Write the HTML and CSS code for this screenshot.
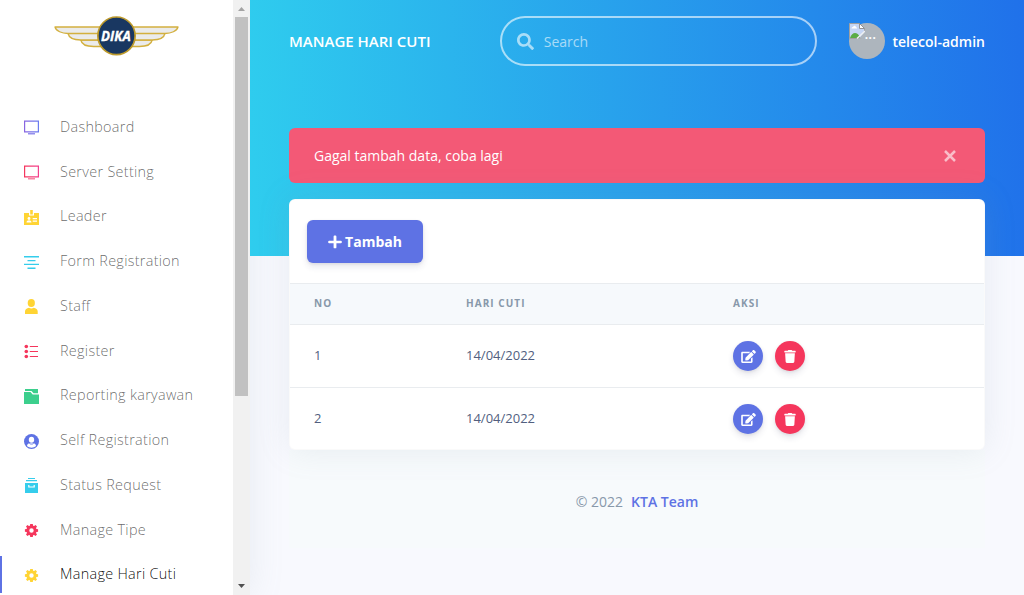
FILE: index.html
```html
<!DOCTYPE html>
<html lang="id">
<head>
<meta charset="utf-8">
<title>Manage Hari Cuti</title>
<link rel="stylesheet" href="styles.css">
</head>
<body>
<svg class="defs" width="0" height="0" aria-hidden="true">
  <defs>
    <linearGradient id="g-primary" gradientUnits="userSpaceOnUse" x1="0" y1="0" x2="15" y2="0"><stop stop-color="#8965e0"/><stop offset="1" stop-color="#6a7df0"/></linearGradient>
    <linearGradient id="g-pink" gradientUnits="userSpaceOnUse" x1="0" y1="0" x2="15" y2="0"><stop stop-color="#f5365c"/><stop offset="1" stop-color="#f3408f"/></linearGradient>
    <symbol id="gear" viewBox="0 0 15 15"><path fill-rule="evenodd" fill="currentColor" d="M6.200 1h2.600l.3 1.700 1 .4 1.400-1 1.500 1.500-1 1.400.4 1 1.700.3v2.400l-1.700.3-.4 1 1 1.400-1.500 1.500-1.400-1-1 .4L8.800 14H6.200l-.3-1.700-1-.4-1.400 1L2 11.400l1-1.400-.4-1L.9 8.700V6.300L2.600 6l.4-1-1-1.400L3.500 2.100l1.400 1 1-.4zM7.500 5.300a2.200 2.200 0 1 0 0 4.400 2.200 2.200 0 0 0 0-4.400z"/></symbol>
    <symbol id="edit" viewBox="0 0 576 512"><path fill="currentColor" d="M402.600 83.200l90.200 90.200c3.800 3.800 3.800 10 0 13.800L274.400 405.600l-92.800 10.300c-12.400 1.400-22.900-9.100-21.500-21.500l10.300-92.800L388.800 83.200c3.800-3.800 10-3.800 13.800 0zm162-22.900l-48.800-48.800c-15.200-15.200-39.900-15.200-55.200 0l-35.400 35.400c-3.800 3.800-3.800 10 0 13.800l90.200 90.200c3.800 3.800 10 3.800 13.800 0l35.400-35.400c15.200-15.300 15.200-40 0-55.200zM384 346.200V448H64V128h229.800c3.200 0 6.200-1.300 8.500-3.500l40-40c7.600-7.600 2.200-20.500-8.500-20.500H48C21.500 64 0 85.500 0 112v352c0 26.500 21.500 48 48 48h352c26.500 0 48-21.500 48-48V306.200c0-10.700-12.900-16-20.500-8.500l-40 40c-2.200 2.300-3.500 5.300-3.500 8.500z"/></symbol>
    <symbol id="trash" viewBox="0 0 448 512"><path fill="currentColor" d="M432 32H312l-9.400-18.700A24 24 0 0 0 281.100 0H166.800a23.700 23.700 0 0 0-21.400 13.300L136 32H16A16 16 0 0 0 0 48v32a16 16 0 0 0 16 16h416a16 16 0 0 0 16-16V48a16 16 0 0 0-16-16zM53.200 467a48 48 0 0 0 47.900 45h245.800a48 48 0 0 0 47.900-45L416 128H32z"/></symbol>
  </defs>
</svg>
<div class="app">
  <aside class="sidebar">
    <div class="sidebar-body">
      <div class="brand">
        <svg width="125" height="40" viewBox="0 0 126 40" preserveAspectRatio="none">
          <g fill="#ebebeb" stroke="#d3b03f" stroke-width="1.300" stroke-linejoin="round">
            <g id="wing">
              <path d="M50 24H27c1 5 7 6.500 13 6.500h10z"/>
              <path d="M50 17H14c1 5 7 7 13 7h23z"/>
              <path d="M50 11H1c1 4 7 6.500 13 6.500h36z"/>
            </g>
            <use href="#wing" transform="matrix(-1 0 0 1 126 0)"/>
          </g>
          <circle cx="63" cy="19.800" r="18.800" fill="#193761" stroke="#bd9a2c" stroke-width="1.700"/>
          <text class="logo-text" x="62.500" y="25" text-anchor="middle" textLength="30" lengthAdjust="spacingAndGlyphs">DIKA</text>
        </svg>
      </div>
      <nav class="nav">
        <a class="nav-item"><svg class="ico" viewBox="0 0 15 15"><path fill="none" stroke="url(#g-primary)" stroke-width="1.200" d="M.6 1.100h13.800v10.800H.6z"/><path fill="#7b74e8" d="M4 13.200h7v1.200H4z"/></svg><span>Dashboard</span></a>
        <a class="nav-item"><svg class="ico" viewBox="0 0 15 15"><path fill="none" stroke="url(#g-pink)" stroke-width="1.200" d="M.6 1.100h13.800v10.800H.6z"/><path fill="#f56a8c" d="M4 13.200h7v1.200H4z"/></svg><span>Server Setting</span></a>
        <a class="nav-item yellow"><svg class="ico" viewBox="0 0 15 15"><path fill="currentColor" d="M0 3h5v2.500h5V3h5v12H0z"/><path fill="currentColor" d="M6.200 0h2.600v4.500H6.200z"/><circle cx="5" cy="8.500" r="1.400" fill="#fff"/><path fill="#fff" d="M2.500 12.500c0-3 5-3 5 0zM8.700 8H13v1.200H8.700zM8.700 10.500H13v1.200H8.700z"/></svg><span>Leader</span></a>
        <a class="nav-item cyan"><svg class="ico" viewBox="0 0 15 15"><path fill="currentColor" d="M0 1h15v1.500H0zM3.500 5h8v1.300h-8zM0 8.800h15v1.300H0zM3.500 12.600h8V14h-8z"/></svg><span>Form Registration</span></a>
        <a class="nav-item yellow"><svg class="ico" viewBox="0 0 15 15"><ellipse cx="7.300" cy="4" rx="3.600" ry="4" fill="currentColor"/><path fill="currentColor" d="M1 15v-2.500C1 10.500 2.800 9 5 8.800c1.500.8 3.200.8 4.700 0 2.200.2 4 1.700 4 3.700V15z"/></svg><span>Staff</span></a>
        <a class="nav-item red"><svg class="ico" viewBox="0 0 15 15"><g fill="currentColor"><circle cx="2.300" cy="2.500" r="1.800"/><circle cx="2.300" cy="7.500" r="1.800"/><circle cx="2.300" cy="12.500" r="1.800"/><path d="M5.800 1.900H14V3H5.800zM5.800 6.900H14V8H5.800zM5.800 11.900H14V13H5.800z"/></g></svg><span>Register</span></a>
        <a class="nav-item green"><svg class="ico" viewBox="0 0 15 15"><path fill="currentColor" d="M1 0h13v4.300H9.500L7.500 2H1z"/><path fill="currentColor" d="M0 3h6.500l2.200 2.500H15V15H0z"/></svg><span>Reporting karyawan</span></a>
        <a class="nav-item indigo"><svg class="ico" viewBox="0 0 15 15"><circle cx="7.500" cy="7.500" r="7.500" fill="currentColor"/><ellipse cx="7.500" cy="5.800" rx="2.700" ry="3" fill="#fff"/><path fill="#fff" d="M3 12c.2-2.200 2-2.700 3-2.700h3c1 0 2.800.5 3 2.700-2.500 2.200-6.500 2.200-9 0z"/><path stroke="currentColor" stroke-width=".8" fill="none" d="M5.300 9.300c1.200 1.200 3.200 1.200 4.400 0"/></svg><span>Self Registration</span></a>
        <a class="nav-item cyan"><svg class="ico" viewBox="0 0 15 15"><path fill="currentColor" d="M4 0h7v1.100H4zM2 2h11v1.200H2zM1 5h13v10H1z"/><path fill="none" stroke="#fff" stroke-width="1.200" d="M4.800 7v2h5.400V7"/></svg><span>Status Request</span></a>
        <a class="nav-item red"><svg class="ico"><use href="#gear"/></svg><span>Manage Tipe</span></a>
        <a class="nav-item yellow active"><svg class="ico"><use href="#gear"/></svg><span>Manage Hari Cuti</span></a>
      </nav>
    </div>
    <div class="scrollbar">
      <svg width="17" height="17" viewBox="0 0 17 17"><path fill="#a3a3a3" d="M5 11h7L8.500 7z"/></svg>
      <div class="thumb"></div>
      <svg class="down" width="17" height="17" viewBox="0 0 17 17"><path fill="#505050" d="M5 6h7l-3.500 4z"/></svg>
    </div>
  </aside>
  <main class="main">
    <header class="topbar">
      <h1 class="title">MANAGE HARI CUTI</h1>
      <div class="search">
        <svg width="17" height="17" viewBox="0 0 512 512"><path fill="currentColor" d="M505 442.700L405.300 343c-4.500-4.500-10.600-7-17-7H372c27.600-35.300 44-79.700 44-128C416 93.100 322.900 0 208 0S0 93.100 0 208s93.100 208 208 208c48.300 0 92.700-16.400 128-44v16.300c0 6.400 2.500 12.500 7 17l99.700 99.700c9.400 9.400 24.600 9.400 33.900 0l28.300-28.300c9.400-9.400 9.400-24.600.1-34zM208 336c-70.700 0-128-57.200-128-128 0-70.700 57.200-128 128-128 70.700 0 128 57.200 128 128 0 70.700-57.200 128-128 128z"/></svg>
        <span>Search</span>
      </div>
      <div class="user">
        <div class="avatar">
          <svg width="16" height="16" viewBox="0 0 16 16"><path fill="#c5d5f4" stroke="#a0a0a0" d="M.5.500h10l5 5v10H.5z"/><path fill="#fff" stroke="#929292" d="M10.500.500v5h5z"/><path fill="#fff" d="M2.500 5.500c0-1.500 1.200-1.500 1.500-1.500 1-2 3-1 3 .3 1.300 0 1.300 1.200 1 1.200z"/><path fill="#5aac46" d="M1 15c2-6 7-7 10-1l.5 1z"/><path fill="#adb5bd" d="M16 8.500V16h-2l-4-.5z"/><path stroke="#eef0f2" stroke-width="1.500" d="M8 15.500L16 8"/></svg>
          <span>...</span>
        </div>
        <span>telecol-admin</span>
      </div>
    </header>
    <div class="content">
      <div class="alert"><span>Gagal tambah data, coba lagi</span>
        <svg width="12" height="12" viewBox="0 0 12 12"><path stroke="currentColor" stroke-width="2.500" d="M1 1l10 10M11 1L1 11"/></svg>
      </div>
      <section class="card">
        <div class="card-header">
          <button class="btn"><svg width="14" height="14" viewBox="0 0 13 14" preserveAspectRatio="none"><path fill="currentColor" d="M5.200 1.500c0-.6.300-.9.900-.9h.8c.6 0 .9.300.9.900v4.200h4.100c.6 0 .9.300.9.800v.9c0 .5-.3.800-.9.800H7.800v4.200c0 .5-.3.900-.9.900h-.8c-.6 0-.9-.4-.9-.9V8.200H1.100c-.6 0-.9-.3-.9-.8v-.9c0-.5.300-.8.900-.8h4.100z"/></svg><span>Tambah</span></button>
        </div>
        <div class="row head"><span>NO</span><span>HARI CUTI</span><span>AKSI</span></div>
        <div class="row"><span>1</span><span>14/04/2022</span><div class="actions"><a class="round"><svg width="15" height="13"><use href="#edit"/></svg></a><a class="round del"><svg width="12" height="13"><use href="#trash"/></svg></a></div></div>
        <div class="row"><span>2</span><span>14/04/2022</span><div class="actions"><a class="round"><svg width="15" height="13"><use href="#edit"/></svg></a><a class="round del"><svg width="12" height="13"><use href="#trash"/></svg></a></div></div>
      </section>
      <footer class="footer"><span>© 2022</span><a>KTA Team</a></footer>
    </div>
  </main>
</div>
</body>
</html>
```
FILE: styles.css
```css
* { box-sizing: border-box; }
body {
  margin: 0;
  background: #f8f9fe;
  font-family: "Open Sans", "Noto Sans", sans-serif;
  color: #525f7f;
}
svg { display: block; flex: none; }
.app { display: flex; height: 595px; overflow: hidden; }

.sidebar {
  display: flex;
  flex: none;
  width: 250px;
  background: #fff;
  box-shadow: 0 0 32px rgba(136, 152, 170, .15);
}
.sidebar-body { width: 233px; overflow: hidden; }
.brand { height: 104.500px; padding: 16px 0 0 54px; }
.logo-text { font: italic 700 14px "Open Sans", sans-serif; fill: #fff; stroke: #fff; stroke-width: .3px; }
.nav-item {
  display: flex;
  align-items: center;
  height: 44.750px;
  padding-left: 24px;
  font-size: 14.400px;
  font-weight: 300;
  letter-spacing: .31px;
  color: rgba(0, 0, 0, .6);
}
.nav-item span { margin-left: 21px; padding-bottom: 1px; }
.nav-item.active {
  height: 36.750px;
  margin-top: 4px;
  padding-left: 22px;
  border-left: 2px solid #5e72e4;
  color: rgba(0, 0, 0, .95);
}
.ico { width: 15px; height: 15px; margin-top: 2px; }
.yellow .ico { color: #ffd434; }
.cyan .ico { color: #35cdec; }
.red .ico { color: #f5365c; }
.green .ico { color: #3ccf8d; }
.indigo .ico { color: #5e72e4; }

.scrollbar { display: flex; flex-direction: column; width: 17px; background: #f1f1f1; }
.thumb { width: 13px; height: 379px; margin-left: 2px; background: #c1c1c1; }
.scrollbar .down { margin-top: auto; }

.main {
  flex: 1;
  min-width: 0;
  padding: 0 39px;
  background: linear-gradient(87deg, #2fcdee 0%, #2071ea 100%) no-repeat 0 0 / 100% 256px;
}
.topbar { display: flex; align-items: center; height: 82px; }
.title { width: 211px; margin: 0; font-size: 15px; font-weight: 600; color: #fff; white-space: nowrap; }
.search {
  display: flex;
  align-items: center;
  gap: 10px;
  width: 317px;
  height: 50px;
  padding: 0 15px;
  border: 2px solid rgba(255, 255, 255, .6);
  border-radius: 32px;
  font-size: 14px;
  color: rgba(255, 255, 255, .6);
}
.user {
  display: flex;
  align-items: center;
  gap: 8px;
  margin-left: 32px;
  font-size: 14px;
  font-weight: 600;
  color: #fff;
  white-space: nowrap;
}
.avatar {
  display: flex;
  width: 36px;
  height: 36px;
  border-radius: 50%;
  background: #adb5bd;
}
.avatar span { line-height: 21px; }

.content { padding-top: 46px; }
.alert {
  display: flex;
  align-items: center;
  justify-content: space-between;
  height: 55px;
  margin-bottom: 16px;
  padding: 0 29px 0 25px;
  border-radius: 6px;
  background: #f35976;
  font-size: 14px;
  color: #fff;
}
.alert svg { color: rgba(255, 255, 255, .6); }
.card {
  position: relative;
  height: 251px;
  border: 1px solid rgba(0, 0, 0, .02);
  border-radius: 6px;
  background: #fff;
  box-shadow: 0 0 32px rgba(136, 152, 170, .15);
}
.card-header { height: 83px; padding: 20px 17px; }
.btn {
  display: flex;
  align-items: center;
  justify-content: center;
  gap: 3px;
  width: 116px;
  height: 43px;
  padding: 0;
  border: 0;
  border-radius: 6px;
  background: #5e72e4;
  box-shadow: 0 4px 6px rgba(50, 50, 93, .11), 0 1px 3px rgba(0, 0, 0, .08);
  font: 700 14px "Open Sans", sans-serif;
  color: #fff;
}
.row {
  display: grid;
  grid-template-columns: 152px 267px 1fr;
  align-items: center;
  height: 63px;
  padding-left: 24px;
  border-top: 1px solid #e9ecef;
  font-size: 13px;
}
.row > span { padding-bottom: 2px; }
.row.head {
  height: 41px;
  background: #f6f9fc;
  font-size: 10px;
  font-weight: 700;
  letter-spacing: 1.050px;
  color: #8898aa;
}
.actions { display: flex; gap: 12px; }
.round {
  display: grid;
  place-items: center;
  width: 30px;
  height: 30px;
  border-radius: 50%;
  background: #5e72e4;
  box-shadow: 0 4px 6px rgba(50, 50, 93, .11), 0 1px 3px rgba(0, 0, 0, .08);
  color: #fff;
}
.round.del { background: #f5365c; }
.footer {
  display: flex;
  align-items: center;
  justify-content: center;
  gap: 8px;
  height: 98px;
  padding-top: 5px;
  background: #f7fafc;
  font-size: 14px;
  color: #8898aa;
}
.footer a { font-weight: 600; color: #5e72e4; }
```
